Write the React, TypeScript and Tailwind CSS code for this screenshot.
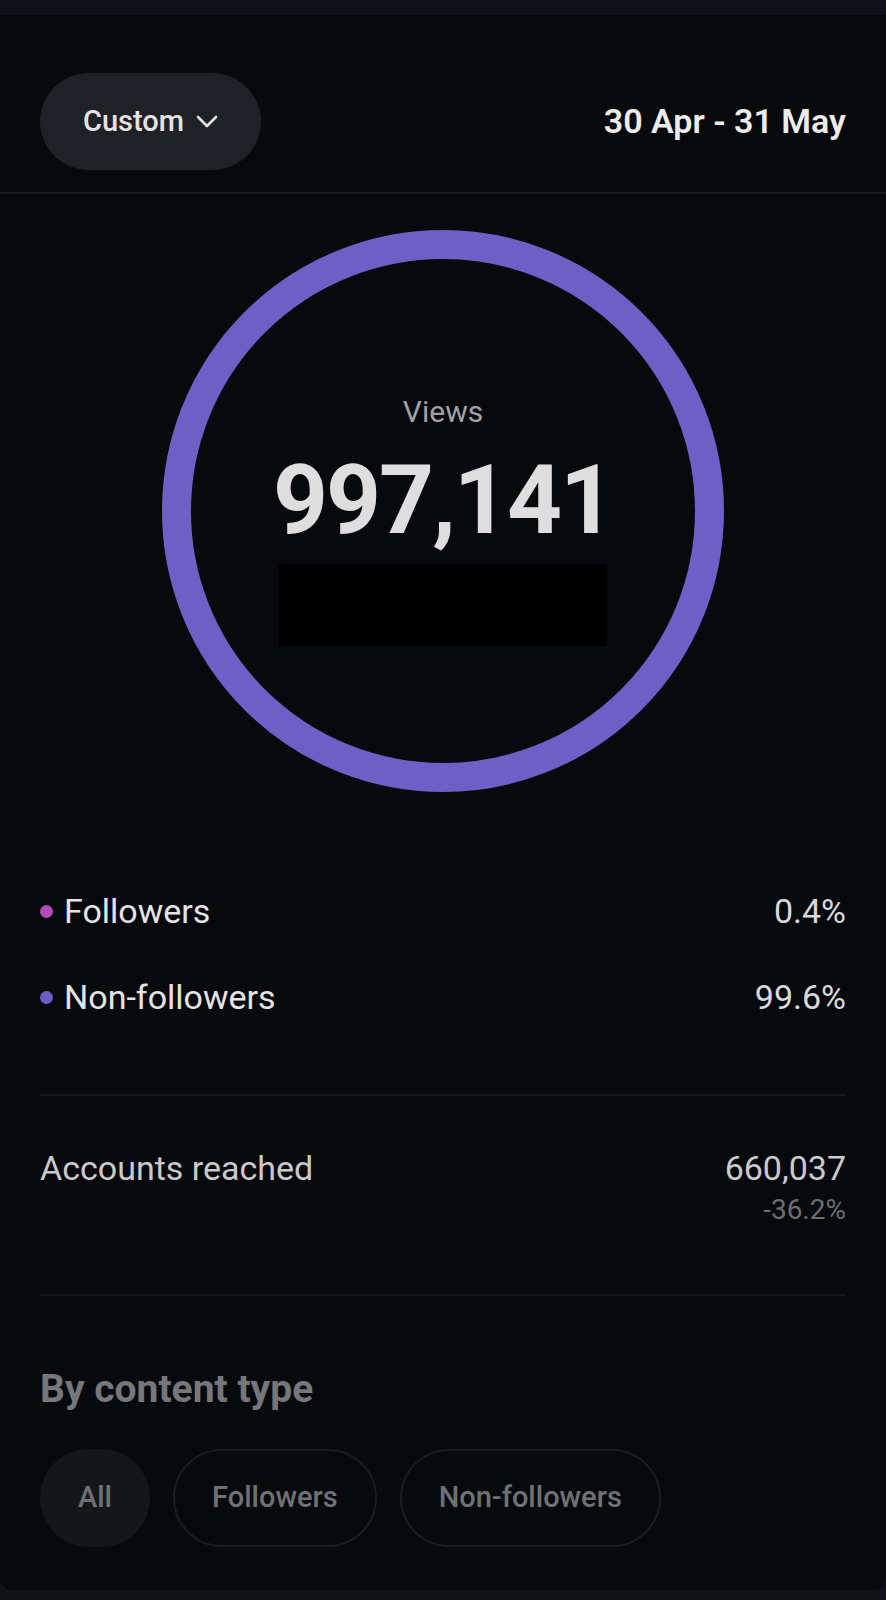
import React from 'react';

const legend = [
  { label: 'Followers', value: '0.4%', dot: 'bg-[#b24bb6]' },
  { label: 'Non-followers', value: '99.6%', dot: 'bg-[#6b5dc6]' },
];

const filters = [
  { label: 'All', active: true },
  { label: 'Followers', active: false },
  { label: 'Non-followers', active: false },
];

const App: React.FC = () => {
  return (
    <div className="min-h-[1600px] w-full bg-[#0f1317] pt-[15px] pb-[10px] font-['Roboto',sans-serif]">
      <div className="bg-[#07090d] rounded-b-[12px] h-[1575px] flex flex-col">
        {/* Header */}
        <div className="flex items-center justify-between px-[40px] pt-[58px] pb-[22px] border-b-2 border-[#181b21]">
          <button className="h-[97px] w-[221px] rounded-full bg-[#1f2126] flex items-center justify-center gap-[12px] text-[#e4e4e6] text-[29px] font-medium">
            <span>Custom</span>
            <svg width="22" height="13" viewBox="0 0 22 13" fill="none">
              <path d="M2 2l9 9 9-9" stroke="#e4e4e6" strokeWidth="2.6" strokeLinecap="round" strokeLinejoin="round" />
            </svg>
          </button>
          <span className="text-[34px] font-semibold text-[#ececec]">30 Apr - 31 May</span>
        </div>

        {/* Views ring */}
        <div className="flex justify-center pt-[36px]">
          <div className="w-[562px] h-[562px] rounded-full border-[29px] border-[#6e5fc7] flex flex-col items-center pt-[135px]">
            <span className="text-[30px] leading-[36px] text-[#a0a2a6]">Views</span>
            <span className="mt-[22px] text-[96px] leading-[96px] font-bold text-[#dedede] tracking-[-2px]">997,141</span>
            <div className="mt-[16px] w-[328px] h-[82px] bg-black" />
          </div>
        </div>

        {/* Legend */}
        <div className="px-[40px] pt-[76px]">
          {legend.map((item) => (
            <div key={item.label} className="h-[86px] flex items-center justify-between">
              <div className="flex items-center">
                <span className={`w-[13px] h-[13px] rounded-full ${item.dot}`} />
                <span className="ml-[11px] text-[34px] text-[#e4e4e6]">{item.label}</span>
              </div>
              <span className="text-[34px] text-[#d8d9db]">{item.value}</span>
            </div>
          ))}
        </div>

        <div className="mx-[40px] mt-[54px] h-[2px] bg-[#17191e]" />

        {/* Accounts reached */}
        <div className="px-[40px] pt-[52px] pb-[68px] flex justify-between">
          <span className="text-[34px] leading-[40px] text-[#c9cacd]">Accounts reached</span>
          <div className="flex flex-col items-end">
            <span className="text-[34px] leading-[40px] text-[#c9cacd]">660,037</span>
            <span className="mt-[6px] text-[28px] leading-[32px] text-[#6b6e73]">-36.2%</span>
          </div>
        </div>

        <div className="mx-[40px] h-[2px] bg-[#14161a]" />

        {/* By content type */}
        <div className="px-[40px] pt-[70px]">
          <h2 className="text-[39px] leading-[46px] font-bold text-[#75777b]">By content type</h2>
          <div className="mt-[37px] flex gap-[23px]">
            {filters.map((f) => (
              <div
                key={f.label}
                className={
                  f.active
                    ? 'h-[98px] px-[38px] rounded-full bg-[#151619] flex items-center text-[29px] font-medium text-[#6f7175]'
                    : 'h-[98px] px-[37px] rounded-full border-2 border-[#1a1c20] flex items-center text-[29px] font-medium text-[#6f7175]'
                }
              >
                {f.label}
              </div>
            ))}
          </div>
        </div>
      </div>
    </div>
  );
};

export default App;
